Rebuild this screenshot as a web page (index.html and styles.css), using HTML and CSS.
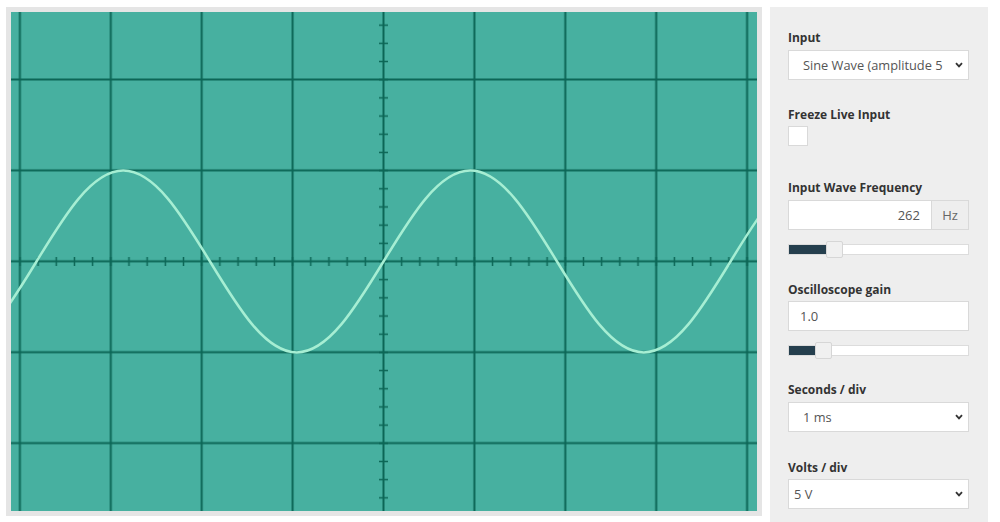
FILE: index.html
```html
<!DOCTYPE html>
<html>
<head>
<meta charset="utf-8">
<link rel="stylesheet" href="styles.css">
</head>
<body>
<div class="app">
  <div class="scope">
    <svg class="screen" width="746" height="499" viewBox="0 0 746 499">
      <defs>
        <pattern id="vlines" patternUnits="userSpaceOnUse" x="327.05" y="0" width="90.9" height="499">
          <rect x="44.45" y="0" width="2" height="499" fill="#0c6656"/>
        </pattern>
        <pattern id="hlines" patternUnits="userSpaceOnUse" x="0" y="22.05" width="746" height="90.9">
          <rect x="0" y="44.45" width="746" height="2" fill="#0c6656"/>
        </pattern>
        <pattern id="hticks" patternUnits="userSpaceOnUse" x="363.41" y="0" width="18.18" height="499">
          <rect x="8.34" y="245" width="1.5" height="9" fill="#0c6656"/>
        </pattern>
        <pattern id="vticks" patternUnits="userSpaceOnUse" x="0" y="240.41" width="746" height="18.18">
          <rect x="368" y="8.34" width="9" height="1.5" fill="#0c6656"/>
        </pattern>
      </defs>
      <rect x="0" y="0" width="746" height="499" fill="#47b0a0"/>
      <rect x="0" y="0" width="746" height="499" fill="url(#vlines)"/>
      <rect x="0" y="0" width="746" height="499" fill="url(#hlines)"/>
      <rect x="8" y="0" width="730" height="499" fill="url(#hticks)"/>
      <rect x="0" y="10" width="746" height="480" fill="url(#vticks)"/>
      <path fill="none" stroke="#a6eed3" stroke-width="2.5" d="M -61.25 340.4 C -29.85 340.4, -2.79 296.07, 25.5 249.5 C 53.79 202.93, 80.85 158.6, 112.25 158.6 C 143.65 158.6, 170.71 202.93, 199 249.5 C 227.29 296.07, 254.35 340.4, 285.75 340.4 C 317.15 340.4, 344.21 296.07, 372.5 249.5 C 400.79 202.93, 427.85 158.6, 459.25 158.6 C 490.65 158.6, 517.71 202.93, 546 249.5 C 574.29 296.07, 601.35 340.4, 632.75 340.4 C 664.15 340.4, 691.21 296.07, 719.5 249.5 C 747.79 202.93, 774.85 158.6, 806.25 158.6"/>
    </svg>
  </div>
  <div class="panel">
    <div class="field f-input">
      <label class="lbl">Input</label>
      <div class="select pad-l">
        <span class="val">Sine Wave (amplitude 5</span>
        <svg class="chev" width="8" height="6" viewBox="0 0 8 6"><path d="M1 1.2 L4 4.4 L7 1.2" fill="none" stroke="#333" stroke-width="1.8"/></svg>
      </div>
    </div>
    <div class="field f-freeze">
      <label class="lbl">Freeze Live Input</label>
      <div class="check"></div>
    </div>
    <div class="field f-freq">
      <label class="lbl">Input Wave Frequency</label>
      <div class="group">
        <div class="text right">262</div>
        <div class="addon">Hz</div>
      </div>
      <div class="slider">
        <div class="track">
          <div class="fill fill-freq"></div>
          <div class="handle"></div>
        </div>
      </div>
    </div>
    <div class="field f-gain">
      <label class="lbl">Oscilloscope gain</label>
      <div class="text">1.0</div>
      <div class="slider">
        <div class="track">
          <div class="fill fill-gain"></div>
          <div class="handle"></div>
        </div>
      </div>
    </div>
    <div class="field f-sec">
      <label class="lbl">Seconds / div</label>
      <div class="select pad-l">
        <span class="val">1 ms</span>
        <svg class="chev" width="8" height="6" viewBox="0 0 8 6"><path d="M1 1.2 L4 4.4 L7 1.2" fill="none" stroke="#333" stroke-width="1.8"/></svg>
      </div>
    </div>
    <div class="field f-volt">
      <label class="lbl">Volts / div</label>
      <div class="select pad-s">
        <span class="val">5 V</span>
        <svg class="chev" width="8" height="6" viewBox="0 0 8 6"><path d="M1 1.2 L4 4.4 L7 1.2" fill="none" stroke="#333" stroke-width="1.8"/></svg>
      </div>
    </div>
  </div>
</div>
</body>
</html>
```

FILE: styles.css
```css
* { box-sizing: border-box; }
html, body { margin: 0; padding: 0; background: #ffffff; }
body { font-family: "Open Sans", "Liberation Sans", sans-serif; }

.app {
  display: flex;
  align-items: flex-start;
  padding: 7px 0 0 6px;
  height: 522px;
  overflow: hidden;
}

.scope {
  width: 756px;
  height: 509px;
  padding: 5px;
  background: #e5e5e5;
  flex: none;
}
.screen { display: block; }

.panel {
  margin-left: 8px;
  width: 218px;
  height: 515px;
  background: #eeeeee;
  padding: 21px 19px 0 18px;
  flex: none;
}

.field { display: flex; flex-direction: column; }
.lbl {
  display: block;
  font-size: 12px;
  font-weight: 700;
  line-height: 20px;
  height: 18px;
  color: #333;
}

.f-freeze { margin-top: 25px; }
.f-freq { margin-top: 32px; }
.f-gain { margin-top: 23px; }
.f-sec { margin-top: 22px; }
.f-volt { margin-top: 26px; }

.select, .text, .group { margin-top: 4px; }
.f-gain .text { margin-top: 3px; }
.f-volt .select { margin-top: 3px; }

.select {
  height: 30px;
  width: 181px;
  background: #fff;
  border: 1px solid #d9d9d9;
  display: flex;
  align-items: center;
  padding-right: 5px;
  font-size: 12.8px;
  color: #555;
}
.pad-l { padding-left: 14px; }
.pad-s { padding-left: 5px; }
.val { white-space: nowrap; flex: 1; }
.chev { flex: none; margin-left: 8px; }

.check {
  margin-top: 3px;
  width: 20px;
  height: 20px;
  background: #fff;
  border: 1px solid #d9d9d9;
}

.group {
  display: flex;
  width: 181px;
  height: 30px;
}
.text {
  height: 30px;
  width: 181px;
  background: #fff;
  border: 1px solid #d9d9d9;
  font-size: 13px;
  color: #555;
  display: flex;
  align-items: center;
  padding: 0 11px;
}
.group .text { margin-top: 0; flex: 1; width: auto; border-right: none; }
.text.right { justify-content: flex-end; }
.addon {
  width: 38px;
  height: 30px;
  background: #eeeeee;
  border: 1px solid #d9d9d9;
  display: flex;
  align-items: center;
  justify-content: center;
  font-size: 13px;
  color: #666;
}

.slider {
  margin-top: 11px;
  height: 16px;
  display: flex;
  align-items: center;
}
.track {
  width: 181px;
  height: 11px;
  background: #fff;
  border: 1px solid #dcdcdc;
  display: flex;
  align-items: center;
}
.fill { height: 9px; background: #253f4e; flex: none; }
.fill-freq { width: 37px; }
.fill-gain { width: 26px; }
.handle {
  flex: none;
  width: 17px;
  height: 17px;
  background: #f0f0f0;
  border: 1px solid #d6d6d6;
  border-radius: 2px;
}
```
